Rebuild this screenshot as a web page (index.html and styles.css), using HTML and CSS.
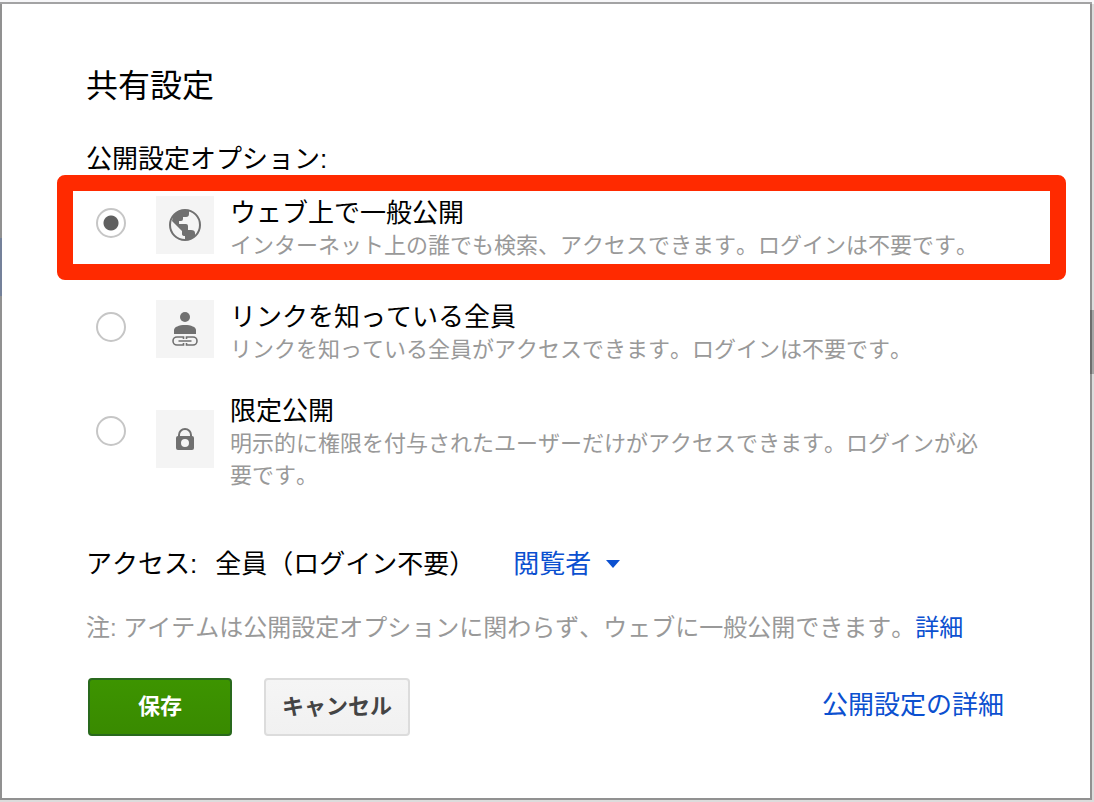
FILE: index.html
```
<!DOCTYPE html>
<html lang="ja">
<head>
    <meta charset="UTF-8" />
    <meta name="viewport" content="width=device-width, initial-scale=1.0" />
    <title>共有設定</title>
    <link rel="stylesheet" href="styles.css">
</head>
<body>
    <form class="dialog">
        <h1>共有設定</h1>

        <!-- Visibility options -->
        <fieldset class="options">
            <legend>公開設定オプション:</legend>

            <label class="option highlighted">
                <input type="radio" name="visibility" value="public" checked>
                <span class="option-icon">
                    <svg width="32" height="32" viewBox="0 0 32 32">
                        <circle cx="16" cy="16" r="15" fill="none" stroke="#707070" stroke-width="2" />
                        <path fill="#707070" d="M3 12L4 7L9 2L15 1L20 2V5Q20 8 17 8H14V10Q14 12 12 12H10V15H17Q19 15 19 17V21H22Q26 21 26 24V27L22 30L16 31V27Q13 27 13 25V22Z" />
                    </svg>
                </span>
                <span class="option-text">
                    <span class="option-title">ウェブ上で一般公開</span>
                    <span class="option-desc">インターネット上の誰でも検索、アクセスできます。ログインは不要です。</span>
                </span>
            </label>

            <label class="option">
                <input type="radio" name="visibility" value="link">
                <span class="option-icon">
                    <svg width="28" height="36" viewBox="0 0 28 36">
                        <circle cx="14" cy="6" r="5" fill="#707070" />
                        <path fill="#707070" d="M3 23V19C3 16 8 14 14 14S25 16 25 19V23Z" />
                        <path fill="none" stroke="#707070" stroke-width="1.6" d="M12.5 28V26H6A4 4 0 0 0 6 34H12.5V32M15.5 28V26H22A4 4 0 0 1 22 34H15.5V32M7.5 30H20.5" />
                    </svg>
                </span>
                <span class="option-text">
                    <span class="option-title">リンクを知っている全員</span>
                    <span class="option-desc">リンクを知っている全員がアクセスできます。ログインは不要です。</span>
                </span>
            </label>

            <label class="option private">
                <input type="radio" name="visibility" value="private">
                <span class="option-icon">
                    <svg width="18" height="22" viewBox="0 0 18 22">
                        <path fill="none" stroke="#707070" stroke-width="2" d="M3 9V7A6 6 0 0 1 15 7V9" />
                        <path fill="#707070" fill-rule="evenodd" d="M2 8H16Q18 8 18 10V20Q18 22 16 22H2Q0 22 0 20V10Q0 8 2 8ZM9 11A4 4 0 1 0 9 19A4 4 0 1 0 9 11Z" />
                    </svg>
                </span>
                <span class="option-text">
                    <span class="option-title">限定公開</span>
                    <span class="option-desc">明示的に権限を付与されたユーザーだけがアクセスできます。ログインが必要です。</span>
                </span>
            </label>
        </fieldset>

        <div class="access">
            <label for="role">アクセス:</label>
            <span class="access-who">全員（ログイン不要）</span>
            <span class="role">
                <select id="role">
                    <option>閲覧者</option>
                </select>
            </span>
        </div>

        <p class="note">注: アイテムは公開設定オプションに関わらず、ウェブに一般公開できます。<a href="#">詳細</a></p>

        <div class="actions">
            <button type="button" class="button save">保存</button>
            <button type="button" class="button cancel">キャンセル</button>
            <a href="#" class="more">公開設定の詳細</a>
        </div>
    </form>
</body>
</html>
```

FILE: styles.css
```
* {
    box-sizing: border-box;
}

/* Dimmed page behind the dialog */
html {
    background:
        linear-gradient(#f7f7f9, #f7f7f9) 0 0 / 100% 4px no-repeat,
        linear-gradient(#a6a6a6, #a6a6a6) right 310px / 4px 64px no-repeat,
        linear-gradient(#b0c4ea, #b0c4ea) 0 238px / 2px 58px no-repeat,
        #dcdcdc;
}

body {
    margin: 0;
    padding: 2px 2px 2px 0;
    font-family: "Liberation Sans", "Noto Sans CJK JP", sans-serif;
    font-size: 26px;
    font-kerning: none;
    text-spacing-trim: space-all;
    line-height: 32px;
    color: #000;
}

a {
    color: #0b50d0;
    text-decoration: none;
}

.dialog {
    padding: 62px 86px 62px 84px;
    background: #fff;
    background-clip: padding-box;
    border: 2px solid rgba(0, 0, 0, 0.34);
}

h1 {
    margin: 0 0 37px;
    font-size: 32px;
    font-weight: normal;
    line-height: 40px;
}

/* Visibility options */
.options {
    margin: 0;
    padding: 0;
    border: none;
    min-width: 0;
}

legend {
    padding: 0;
    margin-bottom: 21px;
}

.option {
    position: relative;
    display: flex;
    align-items: flex-start;
    padding: 0 20px 0 10px;
    margin-bottom: 28px;
}

.option.private {
    margin-bottom: 0;
}

.option.highlighted {
    margin-bottom: 38px;
}

/* Red frame around the chosen option */
.option.highlighted::after {
    content: "";
    position: absolute;
    inset: -21px -62px -18px -29px;
    border: 16px solid #ff2a00;
    border-radius: 8px;
    pointer-events: none;
}

.option input {
    appearance: none;
    flex: none;
    width: 30px;
    height: 30px;
    margin: 12px 30px 0 0;
    border: 2px solid #c6c6c6;
    border-radius: 50%;
    background: #fff;
}

.option input:checked {
    background: radial-gradient(circle, #606060 7px, #fff 8px);
}

.option-icon {
    display: flex;
    flex: none;
    align-items: center;
    justify-content: center;
    width: 58px;
    height: 58px;
    margin-right: 16px;
    background: #f4f4f4;
}

.option.private input {
    margin-top: 22px;
}

.private .option-icon {
    margin-top: 16px;
}

.option-title,
.option-desc {
    display: block;
}

.option-text {
    padding-top: 1px;
}

.option-desc {
    margin-top: 1px;
    font-size: 22px;
    color: #999;
}

/* Access row */
.access {
    display: flex;
    margin-top: 56px;
}

.access-who {
    margin: 0 38px 0 18px;
}

.role {
    position: relative;
}

.role::after {
    content: "";
    position: absolute;
    top: 12px;
    right: 0;
    border: 7px solid transparent;
    border-top: 8px solid #0b50d0;
    border-bottom: none;
    pointer-events: none;
}

.role select {
    appearance: none;
    display: block;
    height: 32px;
    padding: 0 28px 0 0;
    border: none;
    background: none;
    font: inherit;
    color: #0b50d0;
}

.note {
    margin: 32px 0 34px;
    font-size: 24px;
    color: #999;
}

/* Buttons */
.actions {
    display: flex;
    align-items: flex-start;
    gap: 32px;
    padding-left: 2px;
}

.button {
    height: 58px;
    padding: 0 16px 6px;
    border-radius: 4px;
    font: bold 22px "Liberation Sans", "Noto Sans CJK JP", sans-serif;
}

.save {
    min-width: 144px;
    border: 2px solid #29691d;
    background: linear-gradient(#3d9400, #398a00);
    color: #fff;
    text-shadow: 0 1px rgba(0, 0, 0, 0.1);
}

.cancel {
    min-width: 146px;
    border: 2px solid #dcdcdc;
    background: linear-gradient(#f5f5f5, #f1f1f1);
    color: #444;
}

.more {
    margin: 11px 0 0 auto;
}
```
